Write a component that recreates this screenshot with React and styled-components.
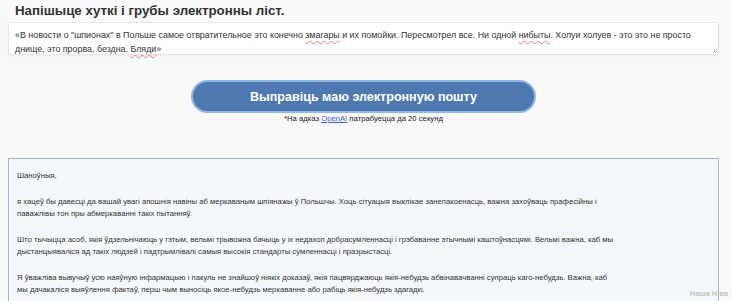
import React from "react";
import styled, { createGlobalStyle } from "styled-components";

const Global = createGlobalStyle`
  html, body { margin: 0; padding: 0; background: #f9f9f9; }
  body { font-family: "Liberation Sans", Arial, sans-serif; color: #2b2b2b; overflow: hidden; }
  * { box-sizing: border-box; }
`;

const Page = styled.div`
  width: 732px;
  height: 301px;
  padding: 0 13px 0 8px;
  display: flex;
  flex-direction: column;
  position: relative;
  overflow: hidden;
`;

const Title = styled.h1`
  margin: 2px 0 0 7px;
  font-size: 13.3px;
  font-weight: 700;
  line-height: 18px;
  color: #333;
`;

const Prompt = styled.div`
  margin-top: 2px;
  height: 33px;
  background: #fff;
  border: 1px solid #e6e6e6;
  border-radius: 2px;
  box-shadow: 0 1px 2px rgba(0, 0, 0, 0.05);
  padding: 5px 6px 0;
  font-size: 8.9px;
  line-height: 14px;
  color: #333;
  position: relative;
`;

const Misspelt = styled.span`
  text-decoration: underline wavy #e08080;
  text-decoration-thickness: 1px;
  text-underline-offset: 2px;
`;

const Grip = styled.span`
  position: absolute;
  right: 1px;
  bottom: 1px;
  width: 5px;
  height: 5px;
  background: linear-gradient(135deg, transparent 50%, #aaa 50%, #aaa 60%, transparent 60%, transparent 75%, #aaa 75%, #aaa 85%, transparent 85%);
`;

const Actions = styled.div`
  display: flex;
  flex-direction: column;
  align-items: center;
  margin-top: 25px;
`;

const SendButton = styled.button`
  width: 345px;
  height: 33px;
  border-radius: 17px;
  border: 2px solid #8fb8e6;
  background: #4e79b0;
  color: #fff;
  font-family: "Liberation Sans", Arial, sans-serif;
  font-weight: 700;
  font-size: 12.55px;
  cursor: pointer;
  padding: 0;
`;

const Note = styled.div`
  margin-top: 1px;
  font-size: 7.7px;
  line-height: 10px;
  color: #222;
`;

const NoteLink = styled.a`
  color: #3a62d8;
  text-decoration: underline;
`;

const Output = styled.div`
  margin-top: 34px;
  flex: 1;
  background: #f4f8fc;
  border: 1px solid #aab2d8;
  border-bottom: none;
  padding: 11px 8px;
  font-size: 7.7px;
  line-height: 12px;
  color: #333;
`;

const Para = styled.p`
  margin: 0 0 14px;
`;

const Watermark = styled.div`
  position: absolute;
  right: 4px;
  bottom: 3px;
  font-size: 7.5px;
  color: #c4c4c4;
  font-weight: 700;
`;

export default function App() {
  return (
    <>
      <Global />
      <Page>
        <Title>Напішыце хуткі і грубы электронны ліст.</Title>
        <Prompt>
          «В новости о "шпионах" в Польше самое отвратительное это конечно <Misspelt>змагары</Misspelt> и их помойки. Пересмотрел все. Ни одной <Misspelt>нибыты</Misspelt>. Холуи холуев - это это не просто
          <br />
          днище, это прорва, бездна. <Misspelt>Бляди</Misspelt>»
          <Grip />
        </Prompt>
        <Actions>
          <SendButton>Выправіць маю электронную пошту</SendButton>
          <Note>
            *На адказ <NoteLink href="#">OpenAI</NoteLink> патрабуецца да 20 секунд
          </Note>
        </Actions>
        <Output>
          <Para>Шаноўныя,</Para>
          <Para>
            я хацеў бы давесці да вашай увагі апошнія навіны аб меркаваным шпіянажы ў Польшчы. Хоць сітуацыя выклікае занепакоенасць, важна захоўваць прафесійны і
            <br />
            паважлівы тон пры абмеркаванні такіх пытанняў.
          </Para>
          <Para>
            Што тычыцца асоб, якія ўдзельнічаюць у гэтым, вельмі трывожна бачыць у іх недахоп добрасумленнасці і грэбаванне этычнымі каштоўнасцямі. Вельмі важна, каб мы
            <br />
            дыстанцыяваліся ад такіх людзей і падтрымлівалі самыя высокія стандарты сумленнасці і празрыстасці.
          </Para>
          <Para>
            Я ўважліва вывучыў усю наяўную інфармацыю і пакуль не знайшоў ніякіх доказаў, якія пацвярджаюць якія-небудзь абвінавачванні супраць каго-небудзь. Важна, каб
            <br />
            мы дачакаліся выяўлення фактаў, перш чым выносіць якое-небудзь меркаванне або рабіць якія-небудзь здагадкі.
          </Para>
        </Output>
        <Watermark>Наша Ніва</Watermark>
      </Page>
    </>
  );
}
